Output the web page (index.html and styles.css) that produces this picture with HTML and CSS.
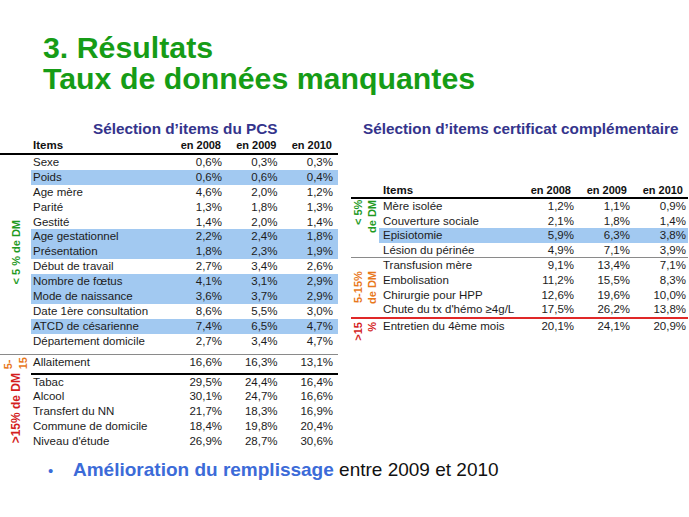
FILE: index.html
```html
<!DOCTYPE html>
<html lang="fr">
<head>
<meta charset="utf-8">
<title>3. Résultats</title>
<link rel="stylesheet" href="styles.css">
</head>
<body>
<div class="slide">
  <h1 class="title">3. Résultats<br>Taux de données manquantes</h1>

  <div class="tables">
    <section class="panel panel-left">
      <h2 class="subtitle">Sélection d’items du PCS</h2>
      <div class="thead">
        <span class="side"></span>
        <div class="cols">
          <span class="item">Items</span><span class="num">en 2008</span><span class="num">en 2009</span><span class="num">en 2010</span>
        </div>
      </div>

      <div class="group lg1">
        <div class="side green"><span class="vlabel">&lt; 5 % de DM</span></div>
        <div class="rows">
          <div class="cols row"><span class="item">Sexe</span><span class="num">0,6%</span><span class="num">0,3%</span><span class="num">0,3%</span></div>
          <div class="cols row hl"><span class="item">Poids</span><span class="num">0,6%</span><span class="num">0,6%</span><span class="num">0,4%</span></div>
          <div class="cols row"><span class="item">Age mère</span><span class="num">4,6%</span><span class="num">2,0%</span><span class="num">1,2%</span></div>
          <div class="cols row"><span class="item">Parité</span><span class="num">1,3%</span><span class="num">1,8%</span><span class="num">1,3%</span></div>
          <div class="cols row"><span class="item">Gestité</span><span class="num">1,4%</span><span class="num">2,0%</span><span class="num">1,4%</span></div>
          <div class="cols row hl"><span class="item">Age gestationnel</span><span class="num">2,2%</span><span class="num">2,4%</span><span class="num">1,8%</span></div>
          <div class="cols row hl"><span class="item">Présentation</span><span class="num">1,8%</span><span class="num">2,3%</span><span class="num">1,9%</span></div>
          <div class="cols row"><span class="item">Début de travail</span><span class="num">2,7%</span><span class="num">3,4%</span><span class="num">2,6%</span></div>
          <div class="cols row hl"><span class="item">Nombre de fœtus</span><span class="num">4,1%</span><span class="num">3,1%</span><span class="num">2,9%</span></div>
          <div class="cols row hl"><span class="item">Mode de naissance</span><span class="num">3,6%</span><span class="num">3,7%</span><span class="num">2,9%</span></div>
          <div class="cols row"><span class="item">Date 1ère consultation</span><span class="num">8,6%</span><span class="num">5,5%</span><span class="num">3,0%</span></div>
          <div class="cols row hl"><span class="item">ATCD de césarienne</span><span class="num">7,4%</span><span class="num">6,5%</span><span class="num">4,7%</span></div>
          <div class="cols row"><span class="item">Département domicile</span><span class="num">2,7%</span><span class="num">3,4%</span><span class="num">4,7%</span></div>
        </div>
      </div>

      <div class="group lg2">
        <div class="side orange"><span class="vlabel">5-<br>15</span></div>
        <div class="rows">
          <div class="cols row"><span class="item">Allaitement</span><span class="num">16,6%</span><span class="num">16,3%</span><span class="num">13,1%</span></div>
        </div>
      </div>

      <div class="group lg3">
        <div class="side red"><span class="vlabel">&gt;15% de DM</span></div>
        <div class="rows">
          <div class="cols row"><span class="item">Tabac</span><span class="num">29,5%</span><span class="num">24,4%</span><span class="num">16,4%</span></div>
          <div class="cols row"><span class="item">Alcool</span><span class="num">30,1%</span><span class="num">24,7%</span><span class="num">16,6%</span></div>
          <div class="cols row"><span class="item">Transfert du NN</span><span class="num">21,7%</span><span class="num">18,3%</span><span class="num">16,9%</span></div>
          <div class="cols row"><span class="item">Commune de domicile</span><span class="num">18,4%</span><span class="num">19,8%</span><span class="num">20,4%</span></div>
          <div class="cols row"><span class="item">Niveau d'étude</span><span class="num">26,9%</span><span class="num">28,7%</span><span class="num">30,6%</span></div>
        </div>
      </div>
    </section>

    <section class="panel panel-right">
      <h2 class="subtitle">Sélection d’items certificat complémentaire</h2>
      <div class="thead">
        <span class="side"></span>
        <div class="cols">
          <span class="item">Items</span><span class="num">en 2008</span><span class="num">en 2009</span><span class="num">en 2010</span>
        </div>
      </div>

      <div class="group rg1">
        <div class="side green"><span class="vlabel">&lt; 5%<br>de DM</span></div>
        <div class="rows">
          <div class="cols row"><span class="item">Mère isolée</span><span class="num">1,2%</span><span class="num">1,1%</span><span class="num">0,9%</span></div>
          <div class="cols row"><span class="item">Couverture sociale</span><span class="num">2,1%</span><span class="num">1,8%</span><span class="num">1,4%</span></div>
          <div class="cols row hl"><span class="item">Episiotomie</span><span class="num">5,9%</span><span class="num">6,3%</span><span class="num">3,8%</span></div>
          <div class="cols row"><span class="item">Lésion du périnée</span><span class="num">4,9%</span><span class="num">7,1%</span><span class="num">3,9%</span></div>
        </div>
      </div>

      <div class="group rg2">
        <div class="side orange"><span class="vlabel">5-15%<br>de DM</span></div>
        <div class="rows">
          <div class="cols row"><span class="item">Transfusion mère</span><span class="num">9,1%</span><span class="num">13,4%</span><span class="num">7,1%</span></div>
          <div class="cols row"><span class="item">Embolisation</span><span class="num">11,2%</span><span class="num">15,5%</span><span class="num">8,3%</span></div>
          <div class="cols row"><span class="item">Chirurgie pour HPP</span><span class="num">12,6%</span><span class="num">19,6%</span><span class="num">10,0%</span></div>
          <div class="cols row"><span class="item">Chute du tx d'hémo ≥4g/L</span><span class="num">17,5%</span><span class="num">26,2%</span><span class="num">13,8%</span></div>
        </div>
      </div>

      <div class="group rg3">
        <div class="side red"><span class="vlabel">&gt;15<br>%</span></div>
        <div class="rows">
          <div class="cols row"><span class="item">Entretien du 4ème mois</span><span class="num">20,1%</span><span class="num">24,1%</span><span class="num">20,9%</span></div>
        </div>
      </div>
    </section>
  </div>

  <ul class="bullets">
    <li><strong class="accent">Amélioration du remplissage</strong> entre 2009 et 2010</li>
  </ul>
</div>
</body>
</html>
```

FILE: styles.css
```css
* {
  box-sizing: border-box;
  margin: 0;
  padding: 0;
}

html, body {
  margin: 0;
  background: #ffffff;
}

body {
  width: 689px;
  height: 517px;
  overflow: hidden;
  font-family: "Liberation Sans", Arial, sans-serif;
  color: #1c1c1c;
}

.title {
  font-size: 30.3px;
  line-height: 31px;
  font-weight: bold;
  color: #169c16;
  padding: 32px 0 0 43px;
  white-space: nowrap;
}

.tables {
  display: flex;
  margin-top: 26px;
}

.panel-left {
  width: 338px;
}

.panel-right {
  width: 337px;
  margin-left: 13px;
}

.subtitle {
  font-size: 15.3px;
  line-height: 18px;
  font-weight: bold;
  color: #34348c;
  white-space: nowrap;
}

.panel-left .subtitle {
  padding-left: 93px;
}

.panel-right .subtitle {
  padding-left: 12px;
}

.thead {
  display: flex;
  font-size: 11px;
  font-weight: bold;
  color: #111;
}

.panel-left .thead {
  height: 15px;
  line-height: 14px;
}

.panel-right .thead {
  margin-top: 46px;
  height: 13px;
  line-height: 13px;
}

.thead .item {
  font-size: 11.5px;
}

.panel-left .side {
  width: 31px;
  flex: none;
}

.panel-right .side {
  width: 28px;
  flex: none;
}

.cols {
  flex: 1;
  display: grid;
  white-space: nowrap;
}

.panel-left .cols {
  grid-template-columns: 1fr 55.5px 55.5px 55.5px;
}

.panel-right .cols {
  grid-template-columns: 1fr 56px 56px 56px;
}

.item {
  padding-left: 2px;
}

.panel-right .item {
  padding-left: 4px;
}

.num {
  text-align: right;
  padding-right: 5px;
}

.panel-left .thead .num {
  padding-right: 6px;
}

.panel-right .num {
  padding-right: 2px;
}

.panel-right .thead .num {
  padding-right: 5px;
}

.group {
  display: flex;
}

.rows {
  flex: 1;
}

.row {
  font-size: 11.5px;
  line-height: 14.9px;
  height: 14.9px;
}

.panel-right .row {
  line-height: 14.6px;
  height: 14.6px;
}

.row.hl {
  background: #a2c9f1;
}

.side {
  display: flex;
  align-items: center;
  justify-content: center;
  font-size: 11px;
  font-weight: bold;
}

.vlabel {
  writing-mode: vertical-rl;
  transform: rotate(180deg);
  white-space: nowrap;
  line-height: 14px;
}

.panel-right .vlabel {
  text-align: end;
}

.green { color: #1f9a1f; }
.orange { color: #e8781c; }
.red { color: #d41e1e; }

/* left table groups */
.lg1 {
  border-top: 2px solid #000;
  padding-bottom: 5px;
}

.lg2 {
  border-top: 1px solid #8a8a8a;
  height: 19px;
}

.lg2 .side {
  align-items: flex-start;
  padding-top: 2px;
}

.lg2 .vlabel {
  line-height: 14.5px;
}

.lg3 .rows {
  border-top: 2px solid #000;
}

.lg3 .side {
  overflow: hidden;
  align-items: flex-end;
  padding-bottom: 7px;
}

.lg3 .vlabel {
  font-size: 12px;
}

/* right table groups */
.rg1 {
  border-top: 2px solid #000;
}

.rg1 .side {
  align-items: flex-start;
  padding-top: 1px;
}

.rg2 {
  border-top: 1px solid #8a8a8a;
}

.rg3 {
  border-top: 2px solid #e02828;
}

.rg3 .side {
  align-items: flex-start;
  padding-top: 3px;
  height: 14.6px;
  overflow: visible;
}

.bullets {
  list-style: none;
  margin-top: 9px;
  padding-left: 48px;
  font-size: 19px;
  line-height: 22px;
  color: #111;
}

.bullets li {
  display: flex;
  align-items: baseline;
  white-space: pre;
}

.bullets li::before {
  content: "•";
  color: #3c6bd8;
  font-size: 15px;
  width: 25px;
  flex: none;
}

.accent {
  color: #3c6bd8;
  font-weight: bold;
}
```
